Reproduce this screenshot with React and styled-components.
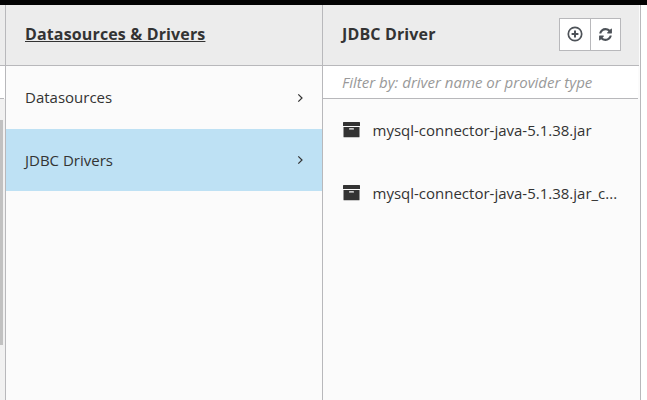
import React from 'react';
import styled, { createGlobalStyle } from 'styled-components';

const Global = createGlobalStyle`
  * { box-sizing: border-box; }
  body { margin: 0; background: #fff; overflow: hidden; }
`;

const Page = styled.div`
  width: 647px;
  height: 400px;
  display: flex;
  flex-direction: column;
  background: #fff;
  color: #333;
  font-family: 'Open Sans', sans-serif;
`;

const TopBar = styled.div`
  height: 5px;
  flex: none;
  background: #030303;
`;

const Columns = styled.div`
  flex: 1;
  display: flex;
  min-height: 0;
`;

const Column = styled.section`
  width: ${(p) => p.$width}px;
  flex: none;
  display: flex;
  flex-direction: column;
  border-right: 1px solid #b8b8bb;
  background: ${(p) => p.$bg || '#fbfbfb'};
`;

const Header = styled.header`
  height: 61px;
  flex: none;
  display: flex;
  align-items: center;
  justify-content: space-between;
  margin-right: ${(p) => p.$inset || 0}px;
  padding: 0 18px 2px 19px;
  background: #ececec;
  border-bottom: 1px solid #b8b8bb;
`;

const StripHeader = styled(Header)`
  padding: 0;
`;

const Title = styled.h2`
  margin: 0;
  font-size: 16px;
  line-height: 22px;
  font-weight: 700;
  letter-spacing: 0.14px;
  text-decoration: ${(p) => (p.$active ? 'underline' : 'none')};
  text-decoration-thickness: 1px;
  text-underline-offset: 1px;
`;

const FilterBox = styled.div`
  height: 33px;
  flex: none;
  margin-right: 2px;
  padding-left: 19px;
  background: #fff;
  border-bottom: 1px solid #b8b8bb;
  color: #999;
  font-size: 15px;
  font-style: italic;
  line-height: 33px;
  white-space: nowrap;
`;

const StripFilter = styled(FilterBox)`
  margin-right: 1px;
  padding: 0;
`;

const ScrollArea = styled.div`
  flex: 1;
  padding-top: 21px;
  background: #f1f1f1;
`;

const Thumb = styled.div`
  width: 3px;
  height: 225px;
  background: #c1c1c1;
`;

const List = styled.ul`
  margin: 0;
  padding: 0;
  list-style: none;
`;

const MenuItem = styled.li`
  height: ${(p) => (p.$selected ? 62 : 63)}px;
  display: flex;
  align-items: center;
  justify-content: space-between;
  padding: 0 18px 0 19px;
  background: ${(p) => (p.$selected ? '#bee1f4' : 'transparent')};
  font-size: 15px;
  font-weight: 400;
`;

const MenuLabel = styled.span`
  line-height: 20px;
  padding-bottom: ${(p) => (p.$selected ? 0 : 1)}px;
`;

const DriverItem = styled.li`
  height: 63px;
  display: flex;
  align-items: center;
  gap: 13px;
  padding: 0 19.5px 2px;
  font-size: 15px;
  line-height: 20px;
  font-weight: 400;
  white-space: nowrap;
`;

const ButtonGroup = styled.div`
  display: flex;
  border: 1px solid #b8b8bb;
`;

const IconButton = styled.button`
  width: 30px;
  height: 31px;
  display: flex;
  align-items: center;
  justify-content: center;
  padding: 0;
  border: 0;
  background: #fff;
  color: #4d5258;
  & + & { border-left: 1px solid #b8b8bb; }
`;

const Icon = styled.svg`
  display: block;
  flex: none;
`;

const Angle = () => (
  <Icon width="7" height="10" viewBox="0 0 7 10" fill="none" stroke="#333" strokeWidth="1.2">
    <path d="M1.3 1.3L5 5 1.3 8.7" />
  </Icon>
);

const Archive = () => (
  <Icon width="17" height="16" viewBox="0 0 17 16" fill="#333">
    <path d="M.5 0h16q.5 0 .5.5V4H0V.5Q0 0 .5 0z" />
    <path fillRule="evenodd" d="M.5 5h16v9.7q0 .5-.5.5H1q-.5 0-.5-.5zM6.6 6.2q-.6 0-.6.7t.6.7h3.8q.6 0 .6-.7t-.6-.7z" />
  </Icon>
);

const AddCircle = () => (
  <Icon width="16" height="16" viewBox="0 0 16 16" fill="none" stroke="currentColor">
    <circle cx="8" cy="8" r="6.7" strokeWidth="1.7" />
    <path d="M8 4.6v6.8M4.6 8h6.8" strokeWidth="2" />
  </Icon>
);

const Refresh = () => (
  <Icon width="15" height="15" viewBox="0 0 1792 1792" fill="currentColor">
    <path d="M1639 1056q0 5-1 7-64 268-268 434.5t-478 166.5q-146 0-282.5-55t-243.5-157l-129 129q-19 19-45 19t-45-19-19-45v-448q0-26 19-45t45-19h448q26 0 45 19t19 45-19 45l-137 137q71 66 161 102t187 36q134 0 250-65t186-179q11-17 53-117 8-23 30-23h192q13 0 22.5 9.5t9.5 22.5zm25-800v448q0 26-19 45t-45 19h-448q-26 0-45-19t-19-45 19-45l138-138q-148-137-349-137-134 0-250 65t-186 179q-11 17-53 117-8 23-30 23h-199q-13 0-22.5-9.5t-9.5-22.5v-7q65-268 270-434.5t480-166.5q146 0 284 55.5t245 156.5l130-129q19-19 45-19t45 19 19 45z" />
  </Icon>
);

const menu = [
  { label: 'Datasources' },
  { label: 'JDBC Drivers', selected: true },
];

const drivers = ['mysql-connector-java-5.1.38.jar', 'mysql-connector-java-5.1.38.jar_c...'];

export default function App() {
  return (
    <Page>
      <Global />
      <TopBar />
      <Columns>
        <Column $width={6} $bg="#fff">
          <StripHeader />
          <StripFilter />
          <ScrollArea><Thumb /></ScrollArea>
        </Column>
        <Column $width={317}>
          <Header><Title $active>Datasources &amp; Drivers</Title></Header>
          <List>
            {menu.map((m) => (
              <MenuItem key={m.label} $selected={m.selected}>
                <MenuLabel $selected={m.selected}>{m.label}</MenuLabel>
                <Angle />
              </MenuItem>
            ))}
          </List>
        </Column>
        <Column $width={318}>
          <Header $inset={1}>
            <Title>JDBC Driver</Title>
            <ButtonGroup>
              <IconButton aria-label="Add"><AddCircle /></IconButton>
              <IconButton aria-label="Refresh"><Refresh /></IconButton>
            </ButtonGroup>
          </Header>
          <FilterBox>Filter by: driver name or provider type</FilterBox>
          <List>
            {drivers.map((d) => (
              <DriverItem key={d}><Archive /><span>{d}</span></DriverItem>
            ))}
          </List>
        </Column>
      </Columns>
    </Page>
  );
}
